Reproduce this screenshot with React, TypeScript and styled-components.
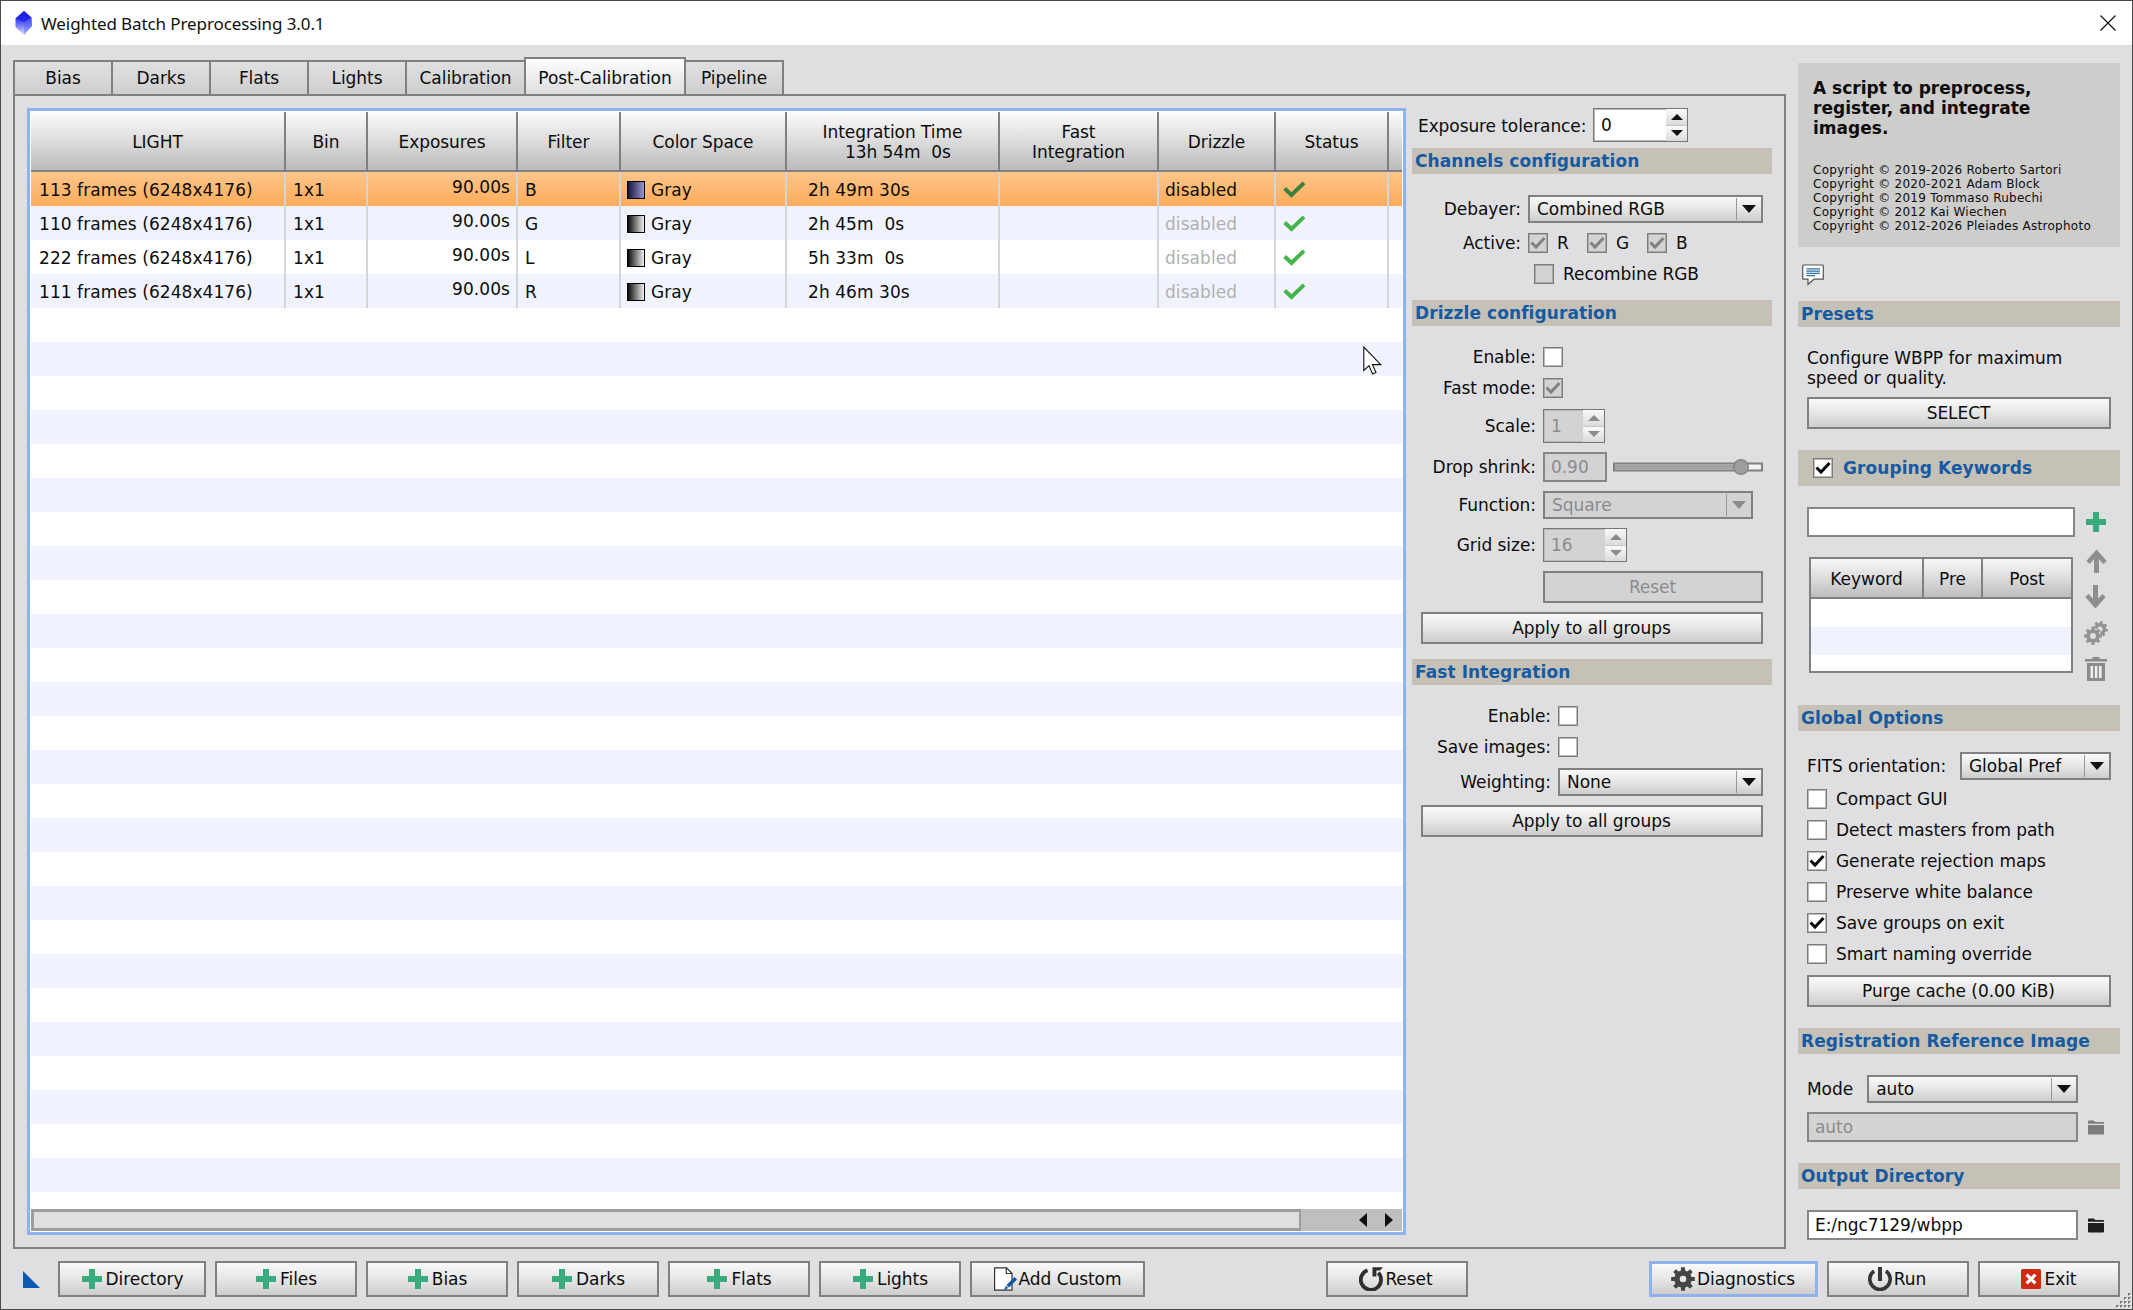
import React from "react";
import styled, { createGlobalStyle, css } from "styled-components";

const Global = createGlobalStyle`
  *, *::before, *::after { box-sizing: border-box; }
  html, body { margin: 0; padding: 0; background: #dfdfe1; }
  body {
    font-family: "DejaVu Sans", sans-serif;
    font-size: 17px;
    line-height: 20px;
    color: #0c0c0c;
    letter-spacing: -0.05px;
  }
  svg { display: block; flex: none; }
`;

const line = "#808082";
const raised = "linear-gradient(#f9f9f9, #e6e6e6 50%, #cdcdcd)";

/* ---------- window ---------- */

const Window = styled.div`
  position: relative;
  display: flex;
  flex-direction: column;
  width: 2133px;
  height: 1310px;
  overflow: hidden;
  border: 1px solid #4a4a4c;
  background: #dfdfe1;
`;

const TitleBar = styled.header`
  display: flex;
  align-items: center;
  height: 44px;
  padding: 0 16px 0 13px;
  background: #fff;
`;

const Title = styled.h1`
  flex: 1;
  margin: 0 0 0 7px;
  padding-top: 1px;
  font: 400 17px/24px "Noto Sans", "Open Sans", sans-serif;
  letter-spacing: -0.1px;
  color: #111;
`;

const Body = styled.div`
  display: flex;
  height: 1204px;
  padding: 12px 12px 0;
`;

const Footer = styled.footer`
  display: flex;
  gap: 9px;
  padding: 12px 12px 0 22px;
`;

const Spring = styled.div`
  flex: 1;
  margin: 0 -9px;
`;

const Corner = styled.div`
  width: 26px;
  padding-top: 10px;
  flex: none;
`;

/* ---------- tabs ---------- */

const TabArea = styled.main`
  display: flex;
  flex-direction: column;
  width: 1773px;
`;

const TabStrip = styled.nav`
  display: flex;
  align-items: flex-end;
  height: 37px;
`;

const Tab = styled.div<{ $w: number; $active?: boolean; $last?: boolean }>`
  width: ${(p) => p.$w}px;
  height: ${(p) => (p.$active ? 37 : 34)}px;
  padding-top: ${(p) => (p.$active ? 9 : 6)}px;
  border: 2px solid ${line};
  border-bottom: 0;
  margin-right: ${(p) => (p.$last ? 0 : -2)}px;
  text-align: center;
  background: ${(p) =>
    p.$active ? "linear-gradient(#fefefe, #dedede)" : "linear-gradient(#e0e0e0, #cfcfcf)"};
`;

const TabPanel = styled.section`
  display: flex;
  width: 1773px;
  height: 1155px;
  padding: 12px 0 0 12px;
  border: 2px solid ${line};
`;

/* ---------- group table ---------- */

const TableFrame = styled.div`
  display: flex;
  flex-direction: column;
  width: 1379px;
  height: 1127px;
  padding: 1px;
  border: 3px solid #90b2ea;
  background: #fff;
`;

const tracks = "255px 82px 150px 103px 166px 213px 159px 117px 113px 1fr";

const HeadRow = styled.div`
  display: grid;
  grid-template-columns: ${tracks};
  height: 60px;
  flex: none;
  border-bottom: 2px solid ${line};
  background: linear-gradient(#fbfbfb, #dcdcdc 50%, #bbbbbb);
`;

const HeadCell = styled.div`
  display: flex;
  align-items: center;
  justify-content: center;
  padding-top: 1px;
  text-align: center;
  white-space: pre;
  border-right: 2px solid ${line};
  &:last-child { border-right: 0; }
`;

const Rows = styled.div`
  flex: 1;
  overflow: hidden;
`;

const Row = styled.div<{ $selected?: boolean; $odd?: boolean }>`
  display: grid;
  grid-template-columns: ${tracks};
  height: 34px;
  background: ${(p) =>
    p.$selected ? "linear-gradient(#fec68c, #fcab5a)" : p.$odd ? "#f0f3fe" : "#fff"};
`;

const Cell = styled.div<{ $pad?: number; $right?: boolean; $dim?: boolean }>`
  display: flex;
  align-items: center;
  justify-content: ${(p) => (p.$right ? "flex-end" : "flex-start")};
  padding: ${(p) => (p.$right ? "0 6px 5px" : "1px 0 0")} ${(p) => p.$pad ?? 7}px;
  white-space: pre;
  letter-spacing: 0.06px;
  color: ${(p) => (p.$dim ? "#b0b0b2" : "inherit")};
  border-right: 2px solid #d4d5d9;
  &:last-child { border-right: 0; }
`;

const Swatch = styled.span<{ $blue?: boolean }>`
  width: 18px;
  height: 18px;
  margin-right: 6px;
  border: 1.5px solid #000;
  background: linear-gradient(
    90deg,
    ${(p) => (p.$blue ? "#14143a, #9a96cc" : "#0a0a0a, #f0f0f0")}
  );
`;

const ScrollTrack = styled.div`
  display: flex;
  flex: none;
  height: 22px;
  background: #bfbfc0;
`;

const ScrollThumb = styled.div`
  width: 1270px;
  border: solid #9d9d9d;
  border-width: 3px 2px 3px 3px;
  background: #dfdfdf;
`;

const ScrollArrows = styled.div`
  display: flex;
  flex: 1;
  align-items: center;
  justify-content: flex-end;
  gap: 18px;
  padding-right: 9px;
`;

/* ---------- generic controls ---------- */

const SectionBar = styled.div<{ $tall?: boolean }>`
  display: flex;
  align-items: center;
  height: ${(p) => (p.$tall ? 36 : 26)}px;
  padding-left: ${(p) => (p.$tall ? 15 : 3)}px;
  flex: none;
  font-weight: 700;
  letter-spacing: 0.08px;
  color: #165aa2;
  background: #c5c1b6;
`;

const Button = styled.button<{ $w?: number; $h?: number; $disabled?: boolean; $focus?: boolean; $shift?: number }>`
  display: flex;
  align-items: center;
  justify-content: center;
  gap: 2px;
  width: ${(p) => (p.$w ? p.$w + "px" : "100%")};
  height: ${(p) => p.$h ?? 32}px;
  flex: none;
  padding: 0 ${(p) => p.$shift ?? 1}px 0 0;
  font: inherit;
  letter-spacing: inherit;
  color: ${(p) => (p.$disabled ? "#8b8b8d" : "#0c0c0c")};
  border: ${(p) => (p.$focus ? "3px solid #90b2ea" : `2px solid ${line}`)};
  background: ${(p) => (p.$disabled ? "#d3d3d3" : raised)};
`;

const Field = styled.div<{ $w: number; $disabled?: boolean }>`
  width: ${(p) => p.$w}px;
  height: 30px;
  flex: none;
  padding: 3px 0 0 6px;
  border: 2px solid #868688;
  color: ${(p) => (p.$disabled ? "#8b8b8d" : "inherit")};
  background: ${(p) => (p.$disabled ? "#d3d3d3" : "#fff")};
`;

const ComboBox = styled.div<{ $w: number; $disabled?: boolean }>`
  display: flex;
  align-items: center;
  width: ${(p) => p.$w}px;
  height: 28px;
  flex: none;
  padding-left: 7px;
  border: 2px solid ${line};
  color: ${(p) => (p.$disabled ? "#8b8b8d" : "#0c0c0c")};
  background: ${(p) => (p.$disabled ? "#d3d3d3" : raised)};
`;

const ComboText = styled.span`
  flex: 1;
  white-space: nowrap;
`;

const ComboArrow = styled.span`
  display: flex;
  align-items: center;
  justify-content: center;
  width: 25px;
  height: 22px;
  padding-right: 1px;
  border-left: 1px solid #98989a;
`;

const SpinFrame = styled.div<{ $w: number; $disabled?: boolean }>`
  display: flex;
  width: ${(p) => p.$w}px;
  height: 34px;
  flex: none;
  border: 1px solid #77777a;
  box-shadow: inset 0 0 0 1px #b9b9bb;
  color: ${(p) => (p.$disabled ? "#8b8b8d" : "inherit")};
  background: ${(p) => (p.$disabled ? "#d3d3d3" : "#fff")};
`;

const SpinText = styled.span`
  flex: 1;
  padding: 6px 0 0 7px;
`;

const SpinButtons = styled.span`
  display: grid;
  grid-template-rows: 1fr 1fr;
  gap: 1px;
  width: 21px;
  background: #c6c6c8;
`;

const SpinButton = styled.span`
  display: flex;
  align-items: center;
  justify-content: center;
  background: linear-gradient(#fafafa, #dadada);
`;

const Box = styled.span<{ $disabled?: boolean }>`
  display: flex;
  align-items: center;
  justify-content: center;
  width: 20px;
  height: 20px;
  flex: none;
  border: 1px solid #7b7b7d;
  box-shadow: inset 0 0 0 1px ${(p) => (p.$disabled ? "#aaaaac" : "#bcbcbe")};
  background: ${(p) => (p.$disabled ? "#d3d3d3" : "#fff")};
`;

const CheckLabel = styled.label<{ $gap?: number; $w?: number; $ml?: number }>`
  display: flex;
  align-items: center;
  gap: ${(p) => p.$gap ?? 9}px;
  height: 22px;
  white-space: nowrap;
  margin-left: ${(p) => p.$ml ?? 0}px;
  ${(p) => p.$w && css`width: ${p.$w}px;`}
`;

/* ---------- configuration column ---------- */

const ConfigColumn = styled.div`
  display: flex;
  flex-direction: column;
  width: 360px;
  margin-left: 6px;
`;

const ToleranceRow = styled.div`
  display: flex;
  align-items: center;
  height: 34px;
  margin-bottom: 6px;
  padding-left: 6px;
`;

const ToleranceLabel = styled.span`
  width: 175px;
  padding-top: 1px;
  letter-spacing: -0.09px;
`;

const Form = styled.div<{ $top: number; $bottom: number }>`
  display: flex;
  flex-direction: column;
  gap: 9px;
  padding: ${(p) => p.$top}px 9px ${(p) => p.$bottom}px;
`;

const FormRow = styled.div<{ $label: number; $drop?: number }>`
  display: grid;
  grid-template-columns: ${(p) => p.$label}px auto;
  justify-content: start;
  align-items: center;
  column-gap: 7px;
  margin-top: ${(p) => p.$drop ?? 0}px;
`;

const FormLabel = styled.span`
  text-align: right;
  white-space: nowrap;
`;

const Inline = styled.div<{ $gap?: number; $h?: number }>`
  display: flex;
  align-items: center;
  gap: ${(p) => p.$gap ?? 0}px;
  ${(p) => p.$h && css`height: ${p.$h}px;`}
`;

/* ---------- sidebar ---------- */

const Sidebar = styled.aside`
  display: flex;
  flex-direction: column;
  width: 322px;
  margin: 6px 0 0 12px;
`;

const About = styled.div`
  height: 184px;
  flex: none;
  padding: 15px 0 0 15px;
  background: #cdcdcb;
`;

const AboutTitle = styled.p`
  margin: 0 0 25px;
  font-weight: 700;
  letter-spacing: 0.02px;
  white-space: pre-line;
`;

const Copyright = styled.p`
  margin: 0;
  font-size: 12px;
  line-height: 14px;
  white-space: pre;
  letter-spacing: 0.27px;
`;

const CommentSlot = styled.div`
  height: 54px;
  flex: none;
  padding: 17px 0 0 4px;
`;

const Pane = styled.div<{ $top: number; $bottom: number }>`
  display: flex;
  flex-direction: column;
  padding: ${(p) => p.$top}px 9px ${(p) => p.$bottom}px;
`;

const Hint = styled.p`
  margin: 0 0 9px;
  white-space: pre-line;
`;

const KeywordArea = styled.div`
  display: grid;
  grid-template-columns: 268px 36px;
`;

const KeywordTable = styled.div`
  display: grid;
  grid-template-rows: 40px 28px 28px 1fr;
  width: 264px;
  height: 116px;
  margin: 20px 0 0 2px;
  border: 2px solid ${line};
  background: #fff;
`;

const KeywordHead = styled.div`
  display: grid;
  grid-template-columns: 113px 59px 1fr;
  border-bottom: 2px solid ${line};
  background: linear-gradient(#f8f8f8, #dcdcdc 50%, #bdbdbd);
`;

const Stripe = styled.div<{ $odd?: boolean }>`
  background: ${(p) => (p.$odd ? "#f0f3fe" : "#fff")};
`;

const ToolColumn = styled.div`
  display: flex;
  flex-direction: column;
  align-items: center;
  gap: 12px;
  padding: 3px 0 0 5px;
`;

const AddSlot = styled.div`
  height: 27px;
`;

const OptionList = styled.div`
  display: flex;
  flex-direction: column;
  gap: 9px;
  margin: 8px 0 10px;
`;

const SplitRow = styled.div`
  display: flex;
  align-items: center;
  justify-content: space-between;
`;

const FolderRow = styled.div`
  display: flex;
  align-items: center;
  gap: 10px;
`;

const CursorLayer = styled.div`
  position: absolute;
  left: 1362px;
  top: 345px;
`;

const GripLayer = styled.div`
  position: absolute;
  right: 0;
  bottom: 0;
`;

/* ---------- icons ---------- */

const Logo = () => (
  <svg width="20" height="24" viewBox="0 0 20 24">
    <defs>
      <linearGradient id="gem" x1="0" y1="0" x2="0" y2="1">
        <stop offset="0" stopColor="#1414d8" />
        <stop offset="0.45" stopColor="#4a55f2" />
        <stop offset="1" stopColor="#e3e6ff" />
      </linearGradient>
    </defs>
    <path d="M10 0 L17.5 6.500 L18 15 L10 24 L1.500 16 L1.500 7.500 Z" fill="url(#gem)" />
    <path d="M10 0 L17.5 6.500 L10 11 L1.500 7.500 Z" fill="#1c1ce6" opacity=".75" />
    <path d="M10 11 L17.5 6.500 L18 15 L10 24 Z" fill="#5763f4" opacity=".4" />
  </svg>
);

const CloseIcon = () => (
  <svg width="16" height="16" viewBox="0 0 16 16" stroke="#111" strokeWidth="1.2">
    <path d="M0.5 0.5 L15.5 15.5 M15.5 0.5 L0.5 15.5" />
  </svg>
);

const Plus = () => (
  <svg width="24" height="24" viewBox="0 0 24 24">
    <path d="M9 2h6v7h7v6h-7v7H9v-7H2V9h7z" fill="#3aab7c" />
  </svg>
);

const Tri = ({ dir, w = 12, h = 6, color = "#111" }: { dir: "up" | "down" | "left" | "right"; w?: number; h?: number; color?: string }) => {
  const pts = {
    up: `0,${h} ${w},${h} ${w / 2},0`,
    down: `0,0 ${w},0 ${w / 2},${h}`,
    left: `${w},0 ${w},${h} 0,${h / 2}`,
    right: `0,0 0,${h} ${w},${h / 2}`,
  }[dir];
  return (
    <svg width={w} height={h} viewBox={`0 0 ${w} ${h}`}>
      <polygon points={pts} fill={color} />
    </svg>
  );
};

const Tick = ({ color = "#0a0a0a" }: { color?: string }) => (
  <svg width="16" height="14" viewBox="0 0 16 14">
    <path d="M1.5 6.5 L6 11 L14.5 2" fill="none" stroke={color} strokeWidth="3" />
  </svg>
);

const StatusTick = ({ color }: { color: string }) => (
  <svg width="23" height="17" viewBox="0 0 23 17">
    <path d="M1.7 7.5 L8.5 14 L21 1.8" fill="none" stroke={color} strokeWidth="3.9" />
  </svg>
);

const gearPath = (cx: number, cy: number, r: number, root: number, teeth: number, spin = 0) => {
  const pts: string[] = [];
  for (let i = 0; i < teeth; i++) {
    const a = (i / teeth) * Math.PI * 2 + spin;
    const s = Math.PI / teeth;
    [
      [root, -s * 0.62],
      [r, -s * 0.42],
      [r, s * 0.42],
      [root, s * 0.62],
    ].forEach(([rad, o]) =>
      pts.push(`${(cx + rad * Math.sin(a + o)).toFixed(2)} ${(cy - rad * Math.cos(a + o)).toFixed(2)}`)
    );
  }
  return `M${pts.join("L")}Z`;
};

const hole = (cx: number, cy: number, r: number) =>
  `M${cx - r} ${cy}a${r} ${r} 0 1 0 ${r * 2} 0a${r} ${r} 0 1 0 ${-r * 2} 0Z`;

const Gear = () => (
  <svg width="24" height="24" viewBox="0 0 24 24">
    <path d={gearPath(12, 12, 12, 8.8, 8) + hole(12, 12, 3.3)} fill="#454547" fillRule="evenodd" />
  </svg>
);

const Gears = () => (
  <svg width="24" height="24" viewBox="0 0 24 24" fill="#939395" fillRule="evenodd">
    <path d={gearPath(16, 8, 8, 6, 8, 0.2) + hole(16, 8, 2.6)} />
    <circle cx="9" cy="15" r="8" fill="#dfdfe1" />
    <path d={gearPath(9, 15, 9, 6.8, 8) + hole(9, 15, 3)} />
  </svg>
);

const ArrowIcon = ({ down }: { down?: boolean }) => (
  <svg width="24" height="24" viewBox="0 0 24 24">
    <g fill="none" stroke="#8f8f91" strokeWidth="4.6" transform={down ? "rotate(180 12 12)" : undefined}>
      <path d="M12.500 24V3" strokeWidth="5" />
      <path d="M4 13.500 L12.500 4 L21 13.500" />
    </g>
  </svg>
);

const Trash = () => (
  <svg width="24" height="24" viewBox="0 0 24 24" fill="#8b8b8d">
    <path d="M8.500 0h7v2H23v2.600H1V2h7.500z" />
    <path d="M3 6h18v18H3z" />
    <path d="M6.500 9h2.600v12H6.500zM10.800 9h2.600v12h-2.600zM15 9h2.600v12H15z" fill="#efeff1" />
  </svg>
);

const Folder = ({ color }: { color: string }) => (
  <svg width="16" height="15" viewBox="0 0 16 15">
    <path d="M0 1.200Q0 .4 .8 .4H5.800L7.300 2H15.200Q16 2 16 2.800V3.800H0Z" fill={color} />
    <path d="M0 5H16V13.400Q16 14.400 15 14.400H1Q0 14.400 0 13.400Z" fill={color} />
  </svg>
);

const Comment = () => (
  <svg width="22" height="22" viewBox="0 0 22 22">
    <path d="M1.500 1H20.500Q21.300 1 21.300 1.800V15.200H12L6 20.400V15.200H1.500Q.7 15.200 .7 14.500V1.800Q.7 1 1.500 1Z" fill="#fff" stroke="#555" strokeWidth="1.200" />
    <path d="M4.500 4.800H18M4.500 7.200H18M4.500 9.400H18M4.500 11.600H13" stroke="#2e6f9c" strokeWidth="1.200" />
  </svg>
);

const PageEdit = () => (
  <svg width="24" height="24" viewBox="0 0 24 24">
    <path d="M1.600 .8H13.500L19 6.300V23.200H1.600Z" fill="#fff" stroke="#333" strokeWidth="1.200" />
    <path d="M13.300 .8V6.500H19" fill="none" stroke="#333" strokeWidth="1.200" />
    <path d="M13.500 18L21.500 10L24 12.500L16 20.500Z" fill="#1553a0" />
    <path d="M13 18.600L15.400 21L10.500 23.800Z" fill="#2a66b0" />
  </svg>
);

const ResetIcon = () => (
  <svg width="24" height="24" viewBox="0 0 24 24">
    <path d="M8.500 3.200A10.100 10.100 0 1 0 19.300 5.800" fill="none" stroke="#2e2e30" strokeWidth="3.800" />
    <path d="M13.500 .2H24L21 3.400H17.400V9.600H13.500Z" fill="#2e2e30" />
  </svg>
);

const Power = () => (
  <svg width="24" height="24" viewBox="0 0 24 24" fill="none" stroke="#363638">
    <path d="M6 4A10.200 10.200 0 1 0 18 4" strokeWidth="3.600" />
    <path d="M12 0V14" strokeWidth="4" />
  </svg>
);

const ExitIcon = () => (
  <svg width="24" height="24" viewBox="0 0 24 24">
    <rect x="2" y="2" width="20" height="20" rx="1.500" fill="#cf2a12" />
    <path d="M7.600 7.600L16.400 16.400M16.400 7.600L7.600 16.400" stroke="#fff" strokeWidth="3.200" />
  </svg>
);

const Slider = () => (
  <svg width="150" height="18" viewBox="0 0 150 18">
    <rect x="1" y="5.500" width="148" height="7" fill="#f2f2f2" stroke="#808082" strokeWidth="2" />
    <rect x="2" y="6.500" width="126" height="5" fill="#a3a3a5" />
    <circle cx="128" cy="9" r="7.300" fill="#9d9d9f" stroke="#858587" strokeWidth="1.400" />
  </svg>
);

const Cursor = () => (
  <svg width="20" height="30" viewBox="0 0 20 30">
    <path d="M.8 1V24.500L6 19.600L9.600 28L13 26.500L9.500 18.600H17.800Z" fill="#fff" stroke="#111" strokeWidth="1.100" />
  </svg>
);

const Grip = () => (
  <svg width="17" height="17" viewBox="0 0 17 17">
    {[0, 1, 2, 3].flatMap((r) =>
      Array.from({ length: r + 1 }, (_, c) => (
        <g key={`${r}-${c}`}>
          <rect x={13 - c * 4} y={1 + r * 4} width="2.500" height="2.500" fill="#77777a" />
          <rect x={14.5 - c * 4} y={2.5 + r * 4} width="1.500" height="1.500" fill="#fff" />
        </g>
      ))
    )}
  </svg>
);

/* ---------- composite controls ---------- */

const Combo = ({ w, children, disabled }: { w: number; children: React.ReactNode; disabled?: boolean }) => (
  <ComboBox $w={w} $disabled={disabled}>
    <ComboText>{children}</ComboText>
    <ComboArrow>
      <Tri dir="down" w={14} h={8} color={disabled ? "#8b8b8d" : "#111"} />
    </ComboArrow>
  </ComboBox>
);

const Spin = ({ w, children, disabled }: { w: number; children: React.ReactNode; disabled?: boolean }) => {
  const color = disabled ? "#8b8b8d" : "#111";
  return (
    <SpinFrame $w={w} $disabled={disabled}>
      <SpinText>{children}</SpinText>
      <SpinButtons>
        <SpinButton><Tri dir="up" color={color} /></SpinButton>
        <SpinButton><Tri dir="down" color={color} /></SpinButton>
      </SpinButtons>
    </SpinFrame>
  );
};

const Check = ({ on, disabled, children, gap, w, ml }: { on?: boolean; disabled?: boolean; children?: React.ReactNode; gap?: number; w?: number; ml?: number }) => (
  <CheckLabel $gap={gap} $w={w} $ml={ml}>
    <Box $disabled={disabled}>{on && <Tick color={disabled ? "#828284" : undefined} />}</Box>
    {children}
  </CheckLabel>
);

/* ---------- data ---------- */

const tabs = [
  { name: "Bias", w: 100 },
  { name: "Darks", w: 100 },
  { name: "Flats", w: 100 },
  { name: "Lights", w: 100 },
  { name: "Calibration", w: 121 },
  { name: "Post-Calibration", w: 162, active: true },
  { name: "Pipeline", w: 100 },
];

const heads = [
  "LIGHT", "Bin", "Exposures", "Filter", "Color Space",
  "Integration Time\n  13h 54m  0s", "Fast\nIntegration", "Drizzle", "Status", "",
];

const groups = [
  { frames: "113 frames (6248x4176)", filter: "B", time: "2h 49m 30s" },
  { frames: "110 frames (6248x4176)", filter: "G", time: "2h 45m  0s" },
  { frames: "222 frames (6248x4176)", filter: "L", time: "5h 33m  0s" },
  { frames: "111 frames (6248x4176)", filter: "R", time: "2h 46m 30s" },
];

const options = [
  { name: "Compact GUI" },
  { name: "Detect masters from path" },
  { name: "Generate rejection maps", on: true },
  { name: "Preserve white balance" },
  { name: "Save groups on exit", on: true },
  { name: "Smart naming override" },
];

const copyrights = [
  "Copyright © 2019-2026 Roberto Sartori",
  "Copyright © 2020-2021 Adam Block",
  "Copyright © 2019 Tommaso Rubechi",
  "Copyright © 2012 Kai Wiechen",
  "Copyright © 2012-2026 Pleiades Astrophoto",
];

/* ---------- sections ---------- */

const GroupTable = () => (
  <TableFrame>
    <HeadRow>
      {heads.map((h, i) => <HeadCell key={i}>{h}</HeadCell>)}
    </HeadRow>
    <Rows>
      {groups.map((g, i) => (
        <Row key={g.filter} $selected={i === 0} $odd={i % 2 === 1}>
          <Cell $pad={8}>{g.frames}</Cell>
          <Cell>1x1</Cell>
          <Cell $right>90.00s</Cell>
          <Cell>{g.filter}</Cell>
          <Cell $pad={6}><Swatch $blue={i === 0} />Gray</Cell>
          <Cell $pad={21}>{g.time}</Cell>
          <Cell />
          <Cell $pad={6} $dim={i !== 0}>disabled</Cell>
          <Cell><StatusTick color={i === 0 ? "#3b803c" : "#43b549"} /></Cell>
          <Cell />
        </Row>
      ))}
      {Array.from({ length: 27 }, (_, i) => <Row key={i} $odd={i % 2 === 1} />)}
    </Rows>
    <ScrollTrack>
      <ScrollThumb />
      <ScrollArrows>
        <Tri dir="left" w={8} h={14} />
        <Tri dir="right" w={8} h={14} />
      </ScrollArrows>
    </ScrollTrack>
  </TableFrame>
);

const Config = () => (
  <ConfigColumn>
    <ToleranceRow>
      <ToleranceLabel>Exposure tolerance:</ToleranceLabel>
      <Spin w={95}>0</Spin>
    </ToleranceRow>

    <SectionBar>Channels configuration</SectionBar>
    <Form $top={21} $bottom={15}>
      <FormRow $label={100}>
        <FormLabel>Debayer:</FormLabel>
        <Combo w={235}>Combined RGB</Combo>
      </FormRow>
      <FormRow $label={100}>
        <FormLabel>Active:</FormLabel>
        <Inline>
          <Check on disabled w={59}>R</Check>
          <Check on disabled w={60}>G</Check>
          <Check on disabled>B</Check>
        </Inline>
      </FormRow>
      <Check disabled ml={113}>Recombine RGB</Check>
    </Form>

    <SectionBar>Drizzle configuration</SectionBar>
    <Form $top={20} $bottom={15}>
      <FormRow $label={115}><FormLabel>Enable:</FormLabel><Check /></FormRow>
      <FormRow $label={115}><FormLabel>Fast mode:</FormLabel><Check on disabled /></FormRow>
      <FormRow $label={115} $drop={1}><FormLabel>Scale:</FormLabel><Spin w={62} disabled>1</Spin></FormRow>
      <FormRow $label={115}>
        <FormLabel>Drop shrink:</FormLabel>
        <Inline $gap={6}><Field $w={64} $disabled>0.90</Field><Slider /></Inline>
      </FormRow>
      <FormRow $label={115}><FormLabel>Function:</FormLabel><Combo w={210} disabled>Square</Combo></FormRow>
      <FormRow $label={115}><FormLabel>Grid size:</FormLabel><Spin w={84} disabled>16</Spin></FormRow>
      <FormRow $label={115}><span /><Button $w={220} $disabled>Reset</Button></FormRow>
      <Button>Apply to all groups</Button>
    </Form>

    <SectionBar>Fast Integration</SectionBar>
    <Form $top={20} $bottom={0}>
      <FormRow $label={130}><FormLabel>Enable:</FormLabel><Check /></FormRow>
      <FormRow $label={130}><FormLabel>Save images:</FormLabel><Check /></FormRow>
      <FormRow $label={130} $drop={1}><FormLabel>Weighting:</FormLabel><Combo w={205}>None</Combo></FormRow>
      <Button>Apply to all groups</Button>
    </Form>
  </ConfigColumn>
);

const Side = () => (
  <Sidebar>
    <About>
      <AboutTitle>{"A script to preprocess,\nregister, and integrate\nimages."}</AboutTitle>
      {copyrights.map((c) => <Copyright key={c}>{c}</Copyright>)}
    </About>
    <CommentSlot><Comment /></CommentSlot>

    <SectionBar>Presets</SectionBar>
    <Pane $top={21} $bottom={21}>
      <Hint>{"Configure WBPP for maximum\nspeed or quality."}</Hint>
      <Button>SELECT</Button>
    </Pane>

    <SectionBar $tall><Check on gap={10}>Grouping Keywords</Check></SectionBar>
    <Pane $top={21} $bottom={24}>
      <KeywordArea>
        <div>
          <Field $w={268} />
          <KeywordTable>
            <KeywordHead>
              <HeadCell>Keyword</HeadCell>
              <HeadCell>Pre</HeadCell>
              <HeadCell>Post</HeadCell>
            </KeywordHead>
            <Stripe />
            <Stripe $odd />
            <Stripe />
          </KeywordTable>
        </div>
        <ToolColumn>
          <AddSlot><Plus /></AddSlot>
          <ArrowIcon />
          <ArrowIcon down />
          <Gears />
          <Trash />
        </ToolColumn>
      </KeywordArea>
    </Pane>

    <SectionBar>Global Options</SectionBar>
    <Pane $top={21} $bottom={21}>
      <SplitRow>FITS orientation:<Combo w={151}>Global Pref</Combo></SplitRow>
      <OptionList>
        {options.map((o) => <Check key={o.name} on={o.on}>{o.name}</Check>)}
      </OptionList>
      <Button>Purge cache (0.00 KiB)</Button>
    </Pane>

    <SectionBar>Registration Reference Image</SectionBar>
    <Pane $top={21} $bottom={21}>
      <Inline $gap={14} $h={28}>Mode<Combo w={211}>auto</Combo></Inline>
      <Inline $h={9} />
      <FolderRow><Field $w={271} $disabled>auto</Field><Folder color="#7c7c7e" /></FolderRow>
    </Pane>

    <SectionBar>Output Directory</SectionBar>
    <Pane $top={21} $bottom={0}>
      <FolderRow><Field $w={271}>E:/ngc7129/wbpp</Field><Folder color="#1f1f21" /></FolderRow>
    </Pane>
  </Sidebar>
);

export default function App() {
  return (
    <>
      <Global />
      <Window>
        <TitleBar>
          <Logo />
          <Title>Weighted Batch Preprocessing 3.0.1</Title>
          <CloseIcon />
        </TitleBar>
        <Body>
          <TabArea>
            <TabStrip>
              {tabs.map((t, i) => (
                <Tab key={t.name} $w={t.w} $active={t.active} $last={i === tabs.length - 1}>
                  {t.name}
                </Tab>
              ))}
            </TabStrip>
            <TabPanel>
              <GroupTable />
              <Config />
            </TabPanel>
          </TabArea>
          <Side />
        </Body>
        <Footer>
          <Corner>
            <svg width="17" height="17" viewBox="0 0 17 17"><path d="M0 0V17H17Z" fill="#0c5ab0" /></svg>
          </Corner>
          <Button $w={148} $h={36}><Plus />Directory</Button>
          <Button $w={142} $h={36}><Plus />Files</Button>
          <Button $w={142} $h={36}><Plus />Bias</Button>
          <Button $w={142} $h={36}><Plus />Darks</Button>
          <Button $w={142} $h={36}><Plus />Flats</Button>
          <Button $w={142} $h={36}><Plus />Lights</Button>
          <Button $w={175} $h={36}><PageEdit />Add Custom</Button>
          <Spring />
          <Button $w={142} $h={36} $shift={2}><ResetIcon />Reset</Button>
          <Spring />
          <Button $w={169} $h={36} $focus><Gear />Diagnostics</Button>
          <Button $w={142} $h={36} $shift={2}><Power />Run</Button>
          <Button $w={142} $h={36} $shift={3}><ExitIcon />Exit</Button>
        </Footer>
        <CursorLayer><Cursor /></CursorLayer>
        <GripLayer><Grip /></GripLayer>
      </Window>
    </>
  );
}
